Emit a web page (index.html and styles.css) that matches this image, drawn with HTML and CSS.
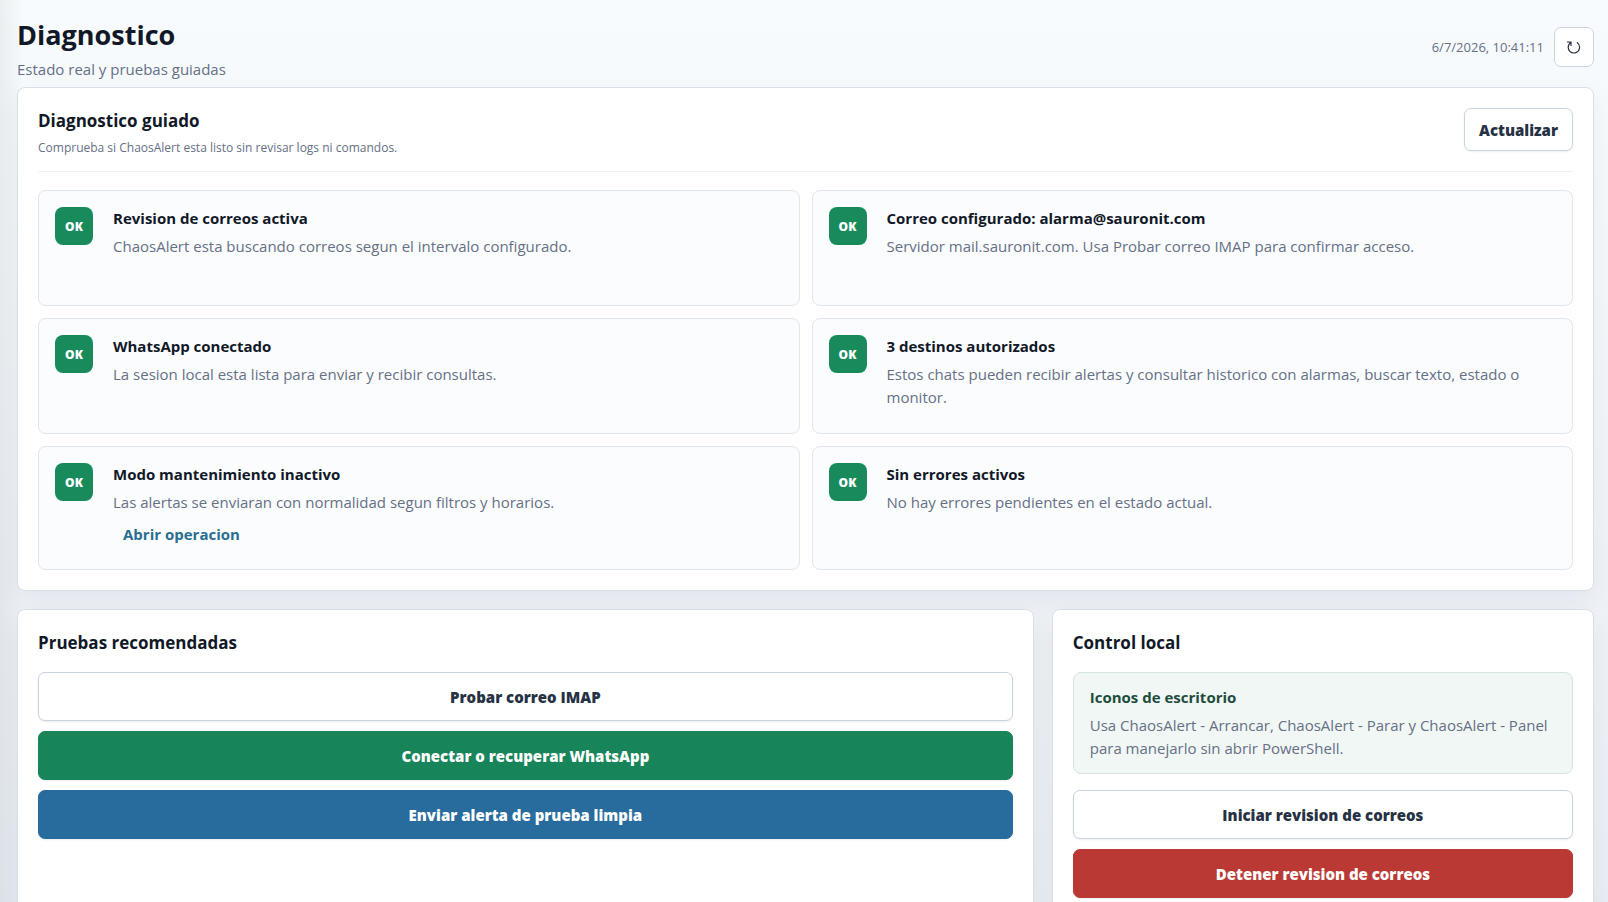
FILE: index.html
```html
<!DOCTYPE html>
<html lang="es">
<head>
    <meta charset="UTF-8">
    <meta name="viewport" content="width=device-width, initial-scale=1">
    <title>Diagnostico</title>
    <link rel="stylesheet" href="styles.css">
</head>
<body>
    <main class="page">
        <header class="topbar">
            <div>
                <h1>Diagnostico</h1>
                <p class="subtitle">Estado real y pruebas guiadas</p>
            </div>
            <div class="topbar-actions">
                <span class="updated">6/7/2026, 10:41:11</span>
                <button type="button" class="icon-button" aria-label="Actualizar">
                    <svg viewBox="0 0 16 16" width="16" height="16" aria-hidden="true">
                        <path d="M1 3h4v4M5 3.2C3.200 4.400 2.200 6.200 2.200 8.300a5.700 5.700 0 0 0 11.400 0c0-2.100-1-3.900-2.700-5.100" />
                    </svg>
                </button>
            </div>
        </header>

        <section class="panel">
            <div class="panel-head">
                <div>
                    <h2>Diagnostico guiado</h2>
                    <p class="hint">Comprueba si ChaosAlert esta listo sin revisar logs ni comandos.</p>
                </div>
                <button type="button" class="button button-small">Actualizar</button>
            </div>
            <div class="checks">
                <article class="check">
                    <span class="badge">OK</span>
                    <div class="check-body">
                        <h3>Revision de correos activa</h3>
                        <p>ChaosAlert esta buscando correos segun el intervalo configurado.</p>
                    </div>
                </article>
                <article class="check">
                    <span class="badge">OK</span>
                    <div class="check-body">
                        <h3>Correo configurado: alarma@sauronit.com</h3>
                        <p>Servidor mail.sauronit.com. Usa Probar correo IMAP para confirmar acceso.</p>
                    </div>
                </article>
                <article class="check">
                    <span class="badge">OK</span>
                    <div class="check-body">
                        <h3>WhatsApp conectado</h3>
                        <p>La sesion local esta lista para enviar y recibir consultas.</p>
                    </div>
                </article>
                <article class="check">
                    <span class="badge">OK</span>
                    <div class="check-body">
                        <h3>3 destinos autorizados</h3>
                        <p>Estos chats pueden recibir alertas y consultar historico con alarmas, buscar texto, estado o monitor.</p>
                    </div>
                </article>
                <article class="check">
                    <span class="badge">OK</span>
                    <div class="check-body">
                        <h3>Modo mantenimiento inactivo</h3>
                        <p>Las alertas se enviaran con normalidad segun filtros y horarios.</p>
                        <a class="check-link" href="#operacion">Abrir operacion</a>
                    </div>
                </article>
                <article class="check">
                    <span class="badge">OK</span>
                    <div class="check-body">
                        <h3>Sin errores activos</h3>
                        <p>No hay errores pendientes en el estado actual.</p>
                    </div>
                </article>
            </div>
        </section>

        <div class="columns">
            <section class="panel">
                <h2>Pruebas recomendadas</h2>
                <div class="stack">
                    <button type="button" class="button">Probar correo IMAP</button>
                    <button type="button" class="button button-green">Conectar o recuperar WhatsApp</button>
                    <button type="button" class="button button-blue">Enviar alerta de prueba limpia</button>
                </div>
            </section>
            <section class="panel">
                <h2>Control local</h2>
                <div class="note">
                    <h3>Iconos de escritorio</h3>
                    <p>Usa ChaosAlert - Arrancar, ChaosAlert - Parar y ChaosAlert - Panel para manejarlo sin abrir PowerShell.</p>
                </div>
                <div class="stack">
                    <button type="button" class="button">Iniciar revision de correos</button>
                    <button type="button" class="button button-red">Detener revision de correos</button>
                </div>
            </section>
        </div>
    </main>
</body>
</html>
```

FILE: styles.css
```css
* {
    box-sizing: border-box;
}

body {
    margin: 0;
    min-height: 100vh;
    background:
        linear-gradient(90deg, rgba(0, 0, 0, 0.05), rgba(0, 0, 0, 0) 24px),
        linear-gradient(180deg, #f8fbfd, #e8edf4);
    color: #111827;
    font-family: "Segoe UI", "Open Sans", "Noto Sans", sans-serif;
    font-size: 15px;
    line-height: 23px;
}

h1,
h2,
h3,
p {
    margin: 0;
}

.page {
    padding: 10px 14px 18px 17px;
}

/* Header */

.topbar {
    display: flex;
    justify-content: space-between;
    align-items: center;
    min-height: 74px;
    margin-bottom: 3px;
}

h1 {
    margin-bottom: 2px;
    font-size: 27px;
    line-height: 42px;
}

.subtitle,
.hint,
.updated,
.check p,
.note p {
    color: #667085;
}

.topbar-actions {
    display: flex;
    align-items: center;
    gap: 10px;
}

.updated {
    font-size: 13px;
}

.icon-button {
    display: flex;
    align-items: center;
    justify-content: center;
    width: 40px;
    height: 40px;
    padding: 0;
    border: 1px solid #cbd3e1;
    border-radius: 7px;
    background: #fff;
    cursor: pointer;
}

.icon-button path {
    fill: none;
    stroke: #263244;
    stroke-width: 1.2;
}

/* Panels */

.panel {
    padding: 20px;
    border: 1px solid #d9dfe8;
    border-radius: 8px;
    background: #fff;
    box-shadow: 0 10px 26px rgba(16, 24, 40, 0.05);
}

h2 {
    font-size: 17px;
    line-height: 26px;
}

.panel-head {
    display: flex;
    justify-content: space-between;
    align-items: flex-start;
    min-height: 64px;
    margin-bottom: 18px;
    border-bottom: 1px solid #edf0f4;
}

.hint {
    font-size: 12px;
    line-height: 28px;
}

.checks {
    display: grid;
    grid-template-columns: 1fr 1fr;
    gap: 12px;
}

.check {
    display: flex;
    gap: 20px;
    min-height: 116px;
    padding: 16px;
    border: 1px solid #e1e5ee;
    border-radius: 8px;
    background: #fbfcfe;
}

.badge {
    display: flex;
    flex: none;
    align-items: center;
    justify-content: center;
    width: 38px;
    height: 38px;
    border-radius: 8px;
    background: #188a5b;
    color: #fff;
    font-size: 12px;
    font-weight: 800;
}

h3 {
    margin-bottom: 5px;
    font-size: 15px;
    line-height: 23px;
}

.check-link {
    display: inline-block;
    padding: 9px 10px 7px;
    color: #2a6f91;
    font-weight: 700;
    text-decoration: none;
}

.columns {
    display: grid;
    grid-template-columns: 1.875fr 1fr;
    gap: 18px;
    margin-top: 18px;
}

.stack {
    display: grid;
    gap: 10px;
    margin-top: 16px;
}

.button {
    height: 49px;
    padding: 0 15px;
    border: 1px solid #cbd3e1;
    border-radius: 7px;
    background: #fff;
    box-shadow: 0 1px 2px rgba(16, 24, 40, 0.08);
    color: #263244;
    font-family: inherit;
    font-size: 15px;
    font-weight: 800;
    cursor: pointer;
}

.button-small {
    height: 43px;
    padding: 0 14px;
}

.button-green {
    border-color: #188459;
    background: #188459;
    color: #fff;
}

.button-blue {
    border-color: #286b9d;
    background: #286b9d;
    color: #fff;
}

.button-red {
    border-color: #bb3934;
    background: #bb3934;
    color: #fff;
}

.note {
    margin-top: 16px;
    padding: 13px 16px;
    border: 1px solid #d5e4de;
    border-radius: 8px;
    background: #f1f7f5;
}

.note h3 {
    color: #1f4d3d;
}
```
